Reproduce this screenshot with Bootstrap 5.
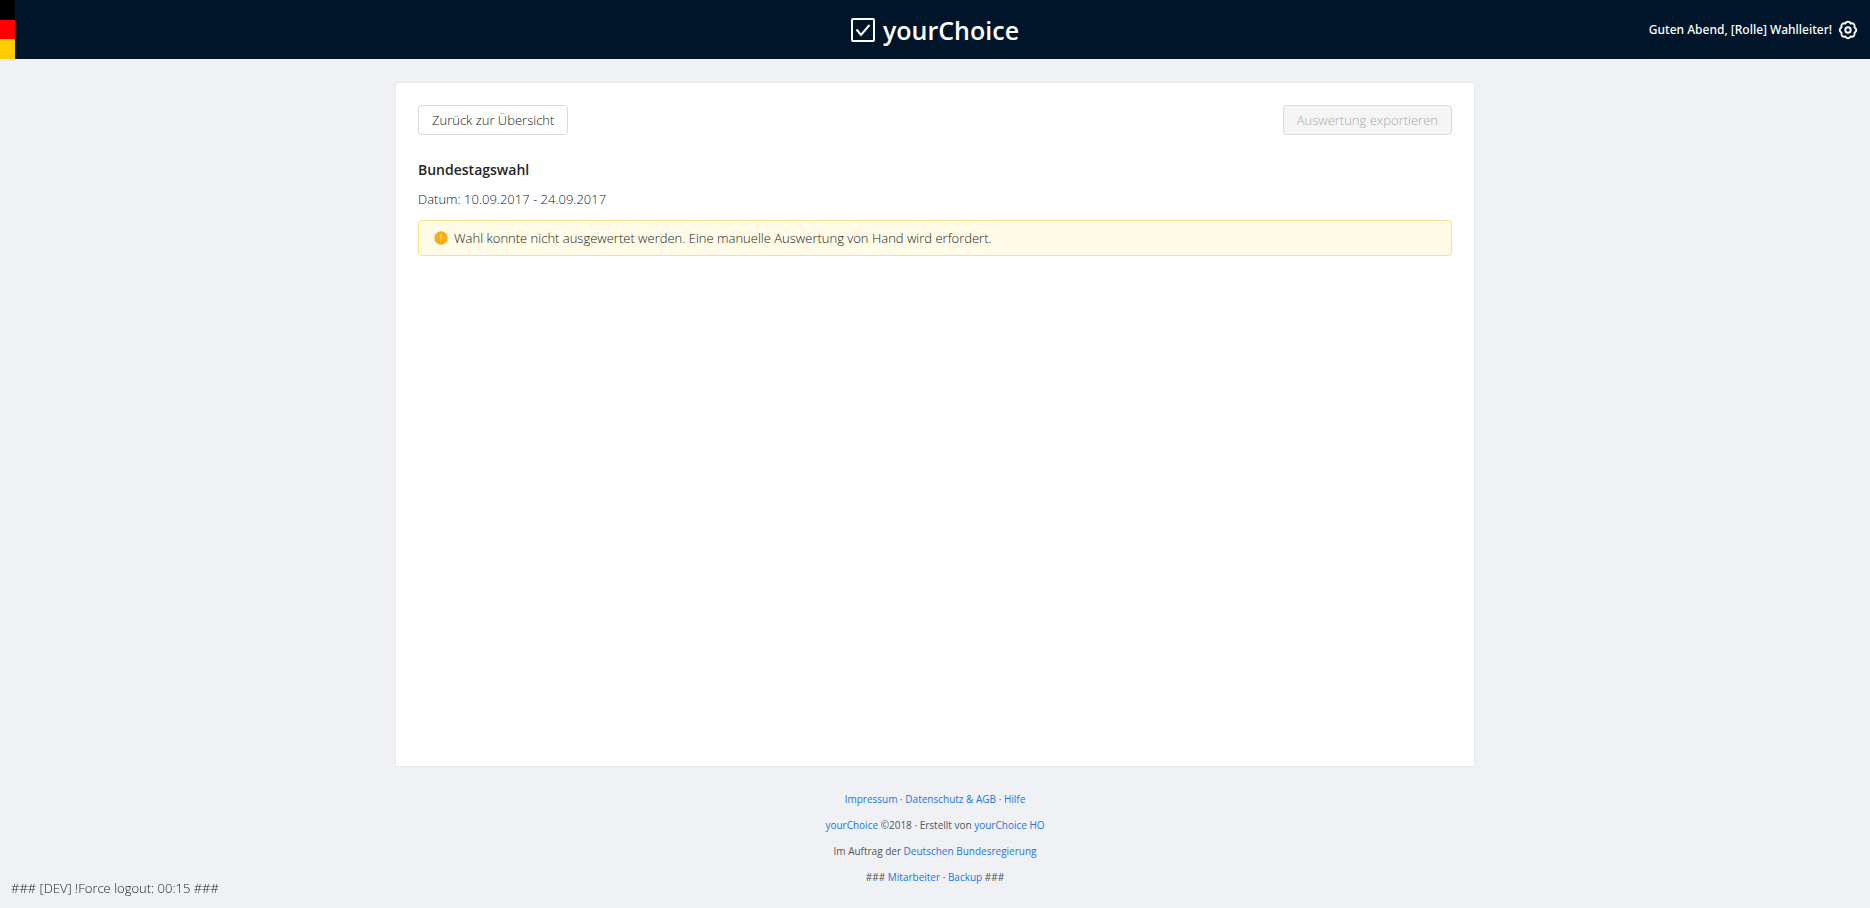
<!DOCTYPE html>
<html lang="de">
<head>
<meta charset="utf-8">
<meta name="viewport" content="width=device-width, initial-scale=1">
<title>yourChoice</title>
<link href="https://cdn.jsdelivr.net/npm/bootstrap@5.3.0/dist/css/bootstrap.min.css" rel="stylesheet">
<style>
  body { background: #eff1f5; color: #222; font-family: "Open Sans", "Noto Sans", sans-serif; font-size: 13px; font-weight: 300; line-height: 20px; }
  a { color: #2474e5; text-decoration: none; }
  .topbar { background: #001529; color: #fff; display: grid; grid-template-columns: 1fr auto 1fr; height: 59px; }
  .flag { width: 15px; display: grid; grid-template-rows: repeat(3, 1fr); }
  .flag-black { background: #000; }
  .flag-red { background: #f00; }
  .flag-gold { background: #fc0; }
  .brand { font-size: 25px; font-weight: 600; line-height: 36px; }
  .user { font-family: "Noto Sans", "Open Sans", sans-serif; font-size: 12px; font-weight: 500; padding-right: 12px; gap: 6px; }
  .content { padding-top: 23px; }
  .panel { width: 100%; max-width: 1080px; background: #fff; border: 1px solid #e6e8eb; padding: 22px; }
  .btn-plain { --bs-btn-font-size: 13px; --bs-btn-font-weight: 300; --bs-btn-line-height: 20px; --bs-btn-padding-x: 13px; --bs-btn-padding-y: 4px; --bs-btn-border-radius: 4px;
    --bs-btn-color: #222; --bs-btn-bg: #fff; --bs-btn-border-color: #d9d9d9; --bs-btn-hover-border-color: #2474e5; --bs-btn-hover-color: #2474e5;
    --bs-btn-disabled-color: #aaa; --bs-btn-disabled-bg: #f5f5f5; --bs-btn-disabled-border-color: #d9d9d9; --bs-btn-disabled-opacity: 1; }
  h1 { color: #262626; font-size: 14px; font-weight: 600; line-height: 22px; }
  .dates { margin-bottom: 11px; }
  .notice { --bs-alert-color: #222; --bs-alert-bg: #fffbe6; --bs-alert-border-color: #f7e48b; --bs-alert-border-radius: 4px; --bs-alert-padding-x: 15px; --bs-alert-padding-y: 7px; gap: 6px; }
  footer { color: #555; font-size: 10px; font-weight: 400; line-height: 16px; padding: 24px 0 23px; gap: 10px; }
  .dev { left: 11px; bottom: 10px; }
</style>
</head>
<body class="d-flex flex-column min-vh-100">
<header class="topbar">
  <div class="flag" role="img" aria-label="Deutschland"><span class="flag-black"></span><span class="flag-red"></span><span class="flag-gold"></span></div>
  <div class="brand d-flex align-items-center gap-2">
    <svg width="24" height="24" viewBox="0 0 24 24" fill="none" stroke="#fff" stroke-width="2" aria-hidden="true"><rect x="1" y="1" width="22" height="22" rx="1"/><path d="M5.500 11.500l4.500 5.500L18.500 7"/></svg>
    <span>yourChoice</span>
  </div>
  <div class="user d-flex align-items-center justify-content-end">
    <span>Guten Abend, [Rolle] Wahlleiter!</span>
    <svg width="20" height="20" viewBox="0 0 20 20" fill="none" stroke="#fff" stroke-width="1.900" stroke-linejoin="round" aria-hidden="true"><path d="M16.470 7.320A2.900 2.900 0 0 1 16.470 12.680A2.900 2.900 0 0 1 12.680 16.470A2.900 2.900 0 0 1 7.320 16.470A2.900 2.900 0 0 1 3.530 12.680A2.900 2.900 0 0 1 3.530 7.320A2.900 2.900 0 0 1 7.320 3.530A2.900 2.900 0 0 1 12.680 3.530A2.900 2.900 0 0 1 16.470 7.320Z"/><circle cx="10" cy="10" r="2.700"/></svg>
  </div>
</header>
<main class="content d-flex justify-content-center flex-grow-1">
  <section class="panel">
    <div class="d-flex justify-content-between mb-4">
      <button type="button" class="btn btn-plain">Zurück zur Übersicht</button>
      <button type="button" class="btn btn-plain" disabled>Auswertung exportieren</button>
    </div>
    <h1 class="mb-2">Bundestagswahl</h1>
    <p class="dates">Datum: 10.09.2017 - 24.09.2017</p>
    <div class="alert notice d-flex align-items-center mb-0" role="alert">
      <svg width="14" height="14" viewBox="0 0 14 14" aria-hidden="true"><circle cx="7" cy="7" r="6.700" fill="#faad14"/><path d="M7 3.500v4.500M7 9.500v1" stroke="#fff3c9"/></svg>
      <span>Wahl konnte nicht ausgewertet werden. Eine manuelle Auswertung von Hand wird erfordert.</span>
    </div>
  </section>
</main>
<footer class="d-flex flex-column align-items-center">
  <div><a href="#">Impressum</a> · <a href="#">Datenschutz &amp; AGB</a> · <a href="#">Hilfe</a></div>
  <div><a href="#">yourChoice</a> ©2018 · Erstellt von <a href="#">yourChoice HO</a></div>
  <div>Im Auftrag der <a href="#">Deutschen Bundesregierung</a></div>
  <div>### <a href="#">Mitarbeiter</a> · <a href="#">Backup</a> ###</div>
</footer>
<div class="dev position-fixed">### [DEV] !Force logout: 00:15 ###</div>
<script src="https://cdn.jsdelivr.net/npm/bootstrap@5.3.0/dist/js/bootstrap.bundle.min.js"></script>
</body>
</html>
